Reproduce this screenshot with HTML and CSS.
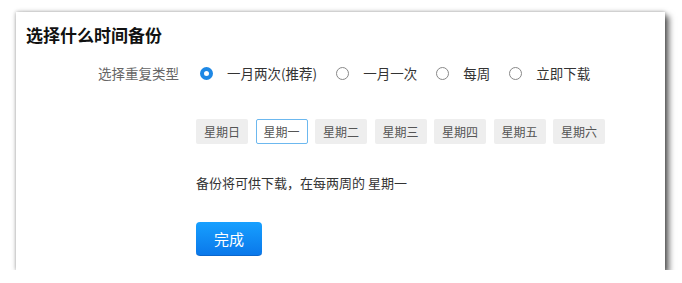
FILE: index.html
```html
<!DOCTYPE html>
<html lang="zh-CN">
<head>
    <meta charset="UTF-8">
    <meta name="viewport" content="width=device-width, initial-scale=1.0">
    <title>选择什么时间备份</title>
    <link rel="stylesheet" href="styles.css">
</head>
<body>
    <div class="card">
        <h2 class="title">选择什么时间备份</h2>
        <div class="row">
            <div class="row-label">选择重复类型</div>
            <div class="options">
                <label class="option"><span class="radio checked"></span>一月两次(推荐)</label>
                <label class="option"><span class="radio"></span>一月一次</label>
                <label class="option"><span class="radio"></span>每周</label>
                <label class="option"><span class="radio"></span>立即下载</label>
            </div>
        </div>
        <div class="content">
            <div class="days">
                <span class="day">星期日</span>
                <span class="day active">星期一</span>
                <span class="day">星期二</span>
                <span class="day">星期三</span>
                <span class="day">星期四</span>
                <span class="day">星期五</span>
                <span class="day">星期六</span>
            </div>
            <p class="summary">备份将可供下载，在每两周的 星期一</p>
            <button class="done">完成</button>
        </div>
    </div>
</body>
</html>
```

FILE: styles.css
```css
body {
    margin: 0;
    padding: 12px 0 0 16px;
    background: #fff;
    font-family: "Noto Sans CJK SC", "Noto Sans", sans-serif;
    color: #333;
}
.card {
    width: 649px;
    height: 258px;
    background: #fff;
    box-shadow: 0 0 4px rgba(0, 0, 0, 0.35), 4px 4px 6px rgba(0, 0, 0, 0.6);
}
.title {
    margin: 0;
    padding: 10px 10px 0;
    font-size: 17px;
    line-height: 25px;
    font-weight: bold;
    color: #111;
}
.row {
    display: flex;
    margin-top: 16px;
    line-height: 20px;
}
.row-label {
    width: 163px;
    text-align: right;
    font-size: 13.5px;
    color: #666;
}
.options {
    display: flex;
    margin-left: 17px;
    font-size: 13.5px;
}
.option {
    display: flex;
    align-items: center;
    margin-right: 19px;
    cursor: pointer;
}
.radio {
    box-sizing: border-box;
    width: 13px;
    height: 13px;
    margin: 0 14px 0 4px;
    border: 1.6px solid #888;
    border-radius: 50%;
}
.option + .option .radio {
    margin-left: 0;
}
.radio.checked {
    border: 4.5px solid #1e88e5;
}
.content {
    padding-left: 180px;
}
.days {
    display: flex;
    gap: 7.5px;
    margin-top: 36px;
}
.day {
    box-sizing: border-box;
    width: 52px;
    height: 25px;
    line-height: 25px;
    text-align: center;
    font-size: 12px;
    color: #555;
    background: #eee;
    border-radius: 2px;
}
.day.active {
    background: #fff;
    border: 1px solid #6cb8ef;
    line-height: 23px;
}
.summary {
    margin: 29px 0 0;
    font-size: 13px;
    line-height: 20px;
    color: #333;
}
.done {
    margin-top: 29px;
    width: 66px;
    height: 34px;
    border: none;
    border-bottom: 1px solid #0a66cc;
    border-radius: 4px;
    background: linear-gradient(#17a0ff, #0a78ea);
    color: #fff;
    font-family: inherit;
    font-size: 15px;
    cursor: pointer;
}
```
